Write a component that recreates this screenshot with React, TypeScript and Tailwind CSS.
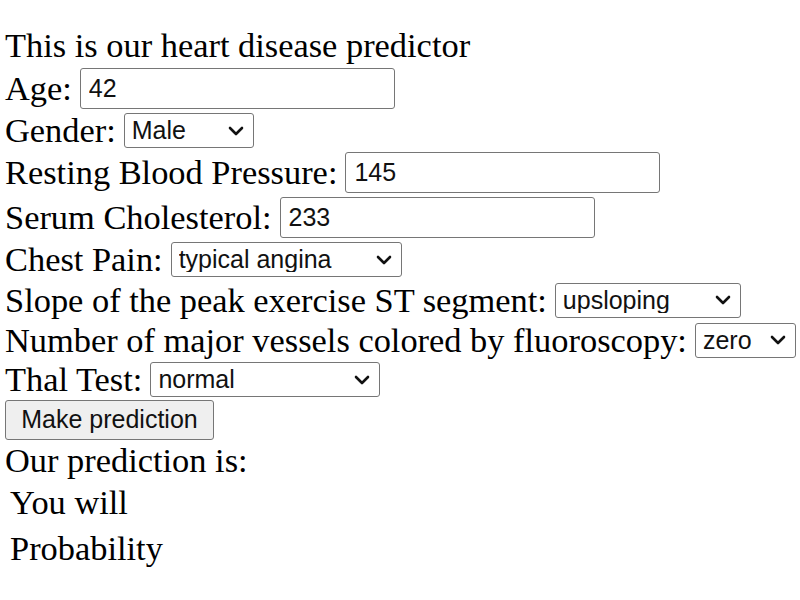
import React from "react";

const serif = { fontFamily: '"Liberation Serif", "Times New Roman", serif' };

function Chevron() {
  return (
    <svg width="16" height="10" viewBox="0 0 16 10" className="pointer-events-none absolute right-[10px] top-1/2 -translate-y-1/2">
      <path d="M2 2 L8 8 L14 2" fill="none" stroke="#111" strokeWidth="2.6" strokeLinecap="round" strokeLinejoin="round" />
    </svg>
  );
}

function Select({ value, width }: { value: string; width: string }) {
  return (
    <span className={`relative inline-flex ${width}`}>
      <select
        defaultValue={value}
        className="h-[35px] w-full appearance-none rounded-[3px] border border-[#767676] bg-white pl-[7px] text-[25px] text-[#111] font-['Liberation_Sans',Arial,sans-serif] outline-none"
      >
        <option>{value}</option>
      </select>
      <Chevron />
    </span>
  );
}

function TextInput({ value }: { value: string }) {
  return (
    <input
      defaultValue={value}
      className="h-[41px] w-[315px] rounded-[3px] border border-[#767676] bg-white px-[8px] text-[25px] text-[#111] font-['Liberation_Sans',Arial,sans-serif] outline-none"
    />
  );
}

export default function App() {
  return (
    <div className="h-[600px] w-[800px] bg-white pl-[5px] pt-[24px] text-[34.4px] leading-none text-black" style={serif}>
      <div className="flex h-[42px] items-center">This is our heart disease predictor</div>
      <div className="flex h-[45px] items-center gap-[8px]">
        <span>Age:</span>
        <TextInput value="42" />
      </div>
      <div className="flex h-[39px] items-center gap-[8px]">
        <span>Gender:</span>
        <Select value="Male" width="w-[130px]" />
      </div>
      <div className="flex h-[45px] items-center gap-[8px]">
        <span>Resting Blood Pressure:</span>
        <TextInput value="145" />
      </div>
      <div className="flex h-[44px] items-center gap-[8px]">
        <span>Serum Cholesterol:</span>
        <TextInput value="233" />
      </div>
      <div className="flex h-[41px] items-center gap-[8px]">
        <span>Chest Pain:</span>
        <Select value="typical angina" width="w-[231px]" />
      </div>
      <div className="flex h-[40px] items-center gap-[8px]">
        <span>Slope of the peak exercise ST segment:</span>
        <Select value="upsloping" width="w-[186px]" />
      </div>
      <div className="flex h-[40px] items-center gap-[8px]">
        <span>Number of major vessels colored by fluoroscopy:</span>
        <Select value="zero" width="w-[101px]" />
      </div>
      <div className="flex h-[39px] items-center gap-[8px]">
        <span>Thal Test:</span>
        <Select value="normal" width="w-[230px]" />
      </div>
      <div className="flex h-[41px] items-center">
        <button className="h-[40px] w-[209px] rounded-[3px] border border-[#767676] bg-[#efefef] text-[25px] text-[#111] font-['Liberation_Sans',Arial,sans-serif]">
          Make prediction
        </button>
      </div>
      <div className="flex h-[41px] items-center">Our prediction is:</div>
      <div className="flex h-[42px] items-center pl-[5px]">You will</div>
      <div className="flex h-[50px] items-center pl-[5px]">Probability</div>
    </div>
  );
}
